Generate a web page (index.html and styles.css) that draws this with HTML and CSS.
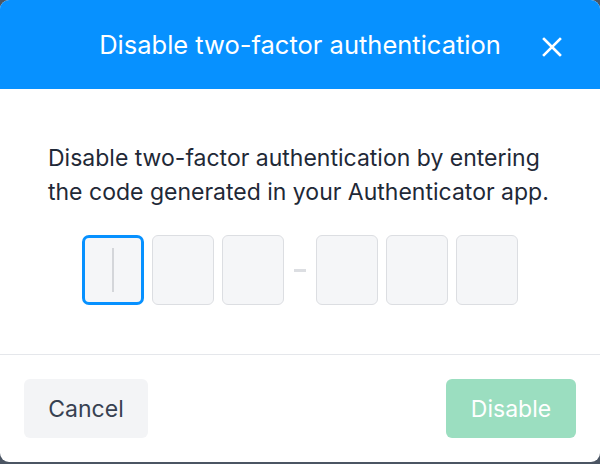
FILE: index.html
```html
<!DOCTYPE html>
<html>
<head>
<meta charset="utf-8">
<link rel="stylesheet" href="styles.css">
</head>
<body>
<div class="modal">
  <div class="header">
    <h1 class="title">Disable two-factor authentication</h1>
    <button class="close" aria-label="Close">
      <svg width="20" height="20" viewBox="0 0 20 20"><path d="M2 2L18 18M18 2L2 18" stroke="#fff" stroke-width="2.6" stroke-linecap="square" fill="none"/></svg>
    </button>
  </div>
  <div class="content">
    <p class="desc">Disable two-factor authentication by entering the code generated in your Authenticator app.</p>
    <div class="code">
      <div class="digit focused"><span class="caret"></span></div>
      <div class="digit"></div>
      <div class="digit"></div>
      <div class="dash"></div>
      <div class="digit"></div>
      <div class="digit"></div>
      <div class="digit"></div>
    </div>
  </div>
  <div class="footer">
    <button class="btn cancel">Cancel</button>
    <button class="btn disable">Disable</button>
  </div>
</div>
</body>
</html>
```
FILE: styles.css
```css
html, body {
  margin: 0;
  padding: 0;
  background: #4b5563;
  width: 600px;
  height: 464px;
  overflow: hidden;
}
.modal {
  width: 600px;
  height: 462px;
  background: #fff;
  border-radius: 9px;
  overflow: hidden;
  display: flex;
  flex-direction: column;
  font-family: Inter, "Noto Sans", sans-serif;
}
.header {
  position: relative;
  height: 89px;
  background: #0791ff;
  display: flex;
  align-items: center;
  justify-content: center;
  flex-shrink: 0;
}
.title {
  margin: 0;
  color: #fff;
  font-size: 25.5px;
  font-weight: 400;
  line-height: 30px;
}
.close {
  position: absolute;
  right: 37px;
  top: 36px;
  width: 22px;
  height: 22px;
  padding: 0;
  border: 0;
  background: none;
  display: flex;
  align-items: center;
  justify-content: center;
}
.content {
  padding: 52px 48px 49px;
  border-bottom: 1px solid #e5e7eb;
}
.desc {
  margin: 0;
  font-size: 23px;
  line-height: 34px;
  color: #1f2937;
}
.code {
  margin-top: 26px;
  display: flex;
  justify-content: center;
  align-items: center;
  gap: 8px;
}
.digit {
  box-sizing: border-box;
  width: 62px;
  height: 70px;
  background: #f5f6f8;
  border: 1px solid #dcdee2;
  border-radius: 6px;
  display: flex;
  align-items: center;
  justify-content: center;
}
.digit.focused {
  border: 3px solid #0791ff;
  border-radius: 7px;
}
.caret {
  width: 2px;
  height: 44px;
  background: #d4d6da;
}
.dash {
  width: 12px;
  height: 3px;
  background: #dcdee2;
  margin: 0 2px;
}
.footer {
  flex: 1;
  padding: 24px;
  display: flex;
  justify-content: space-between;
  align-items: flex-start;
}
.btn {
  height: 59px;
  border: 0;
  border-radius: 6px;
  font-family: Inter, "Noto Sans", sans-serif;
  font-size: 23px;
  padding: 0;
}
.cancel {
  width: 124px;
  background: #f3f4f6;
  color: #374151;
}
.disable {
  width: 130px;
  background: #9bdec0;
  color: #fff;
}
```
